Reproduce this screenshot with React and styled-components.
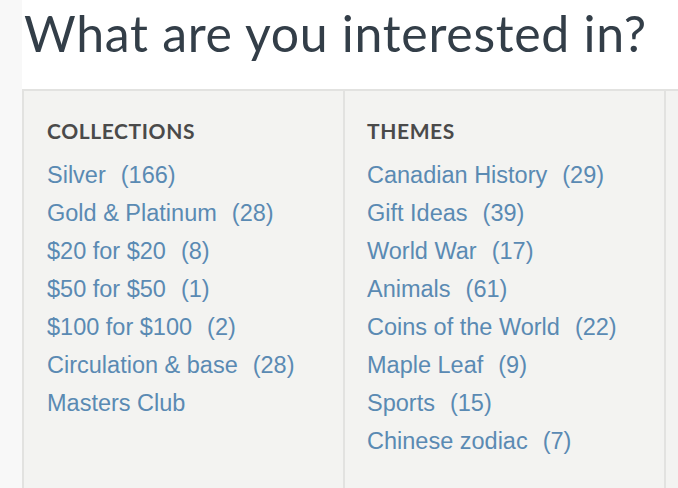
import React from 'react';
import styled, { createGlobalStyle } from 'styled-components';

const GlobalStyle = createGlobalStyle`
  html, body {
    margin: 0;
    padding: 0;
    background: #f8f8f8;
  }
`;

const Page = styled.div`
  display: flex;
  height: 488px;
  overflow: hidden;
`;

const Gutter = styled.div`
  flex: 0 0 22px;
  background: #f8f8f8;
`;

const Main = styled.div`
  flex: 1;
  background: #ffffff;
  display: flex;
  flex-direction: column;
`;

const Title = styled.h1`
  margin: 0;
  padding: 3px 0 0 2px;
  height: 89px;
  box-sizing: border-box;
  font-family: 'Lato', sans-serif;
  font-weight: 400;
  font-size: 50px;
  letter-spacing: 0.7px;
  line-height: 60px;
  color: #333e48;
  white-space: nowrap;
`;

const Panel = styled.div`
  flex: 1;
  display: grid;
  grid-template-columns: 321px 321px 1fr;
  background: #f3f3f1;
  border-top: 2px solid #e2e2e0;
  border-left: 2px solid #e2e2e0;
`;

const Column = styled.div`
  padding: 27px 22px 0 23px;
  border-right: 2px solid #e2e2e0;

  & + & {
    padding-left: 22px;
  }
`;

const Heading = styled.h2`
  margin: 0 0 12px;
  font-family: 'Lato', sans-serif;
  font-weight: 700;
  font-size: 21px;
  letter-spacing: 0.6px;
  line-height: 26px;
  color: #4a4a4a;
  text-transform: uppercase;
`;

const List = styled.ul`
  list-style: none;
  margin: 0;
  padding: 0;
`;

const Item = styled.li`
  font-family: 'Liberation Sans', Arial, sans-serif;
  font-size: 23.5px;
  line-height: 38px;
  color: #5a8ab3;
  white-space: nowrap;
`;

const Count = styled.span`
  margin-left: 15px;
`;

const collections = [
  ['Silver', 166],
  ['Gold & Platinum', 28],
  ['$20 for $20', 8],
  ['$50 for $50', 1],
  ['$100 for $100', 2],
  ['Circulation & base', 28],
  ['Masters Club'],
];

const themes = [
  ['Canadian History', 29],
  ['Gift Ideas', 39],
  ['World War', 17],
  ['Animals', 61],
  ['Coins of the World', 22],
  ['Maple Leaf', 9],
  ['Sports', 15],
  ['Chinese zodiac', 7],
];

const Group = ({ title, items }) => (
  <Column>
    <Heading>{title}</Heading>
    <List>
      {items.map(([name, count]) => (
        <Item key={name}>
          {name}
          {count !== undefined && <Count>({count})</Count>}
        </Item>
      ))}
    </List>
  </Column>
);

export default function App() {
  return (
    <>
      <GlobalStyle />
      <Page>
        <Gutter />
        <Main>
          <Title>What are you interested in?</Title>
          <Panel>
            <Group title="Collections" items={collections} />
            <Group title="Themes" items={themes} />
            <Column />
          </Panel>
        </Main>
      </Page>
    </>
  );
}
